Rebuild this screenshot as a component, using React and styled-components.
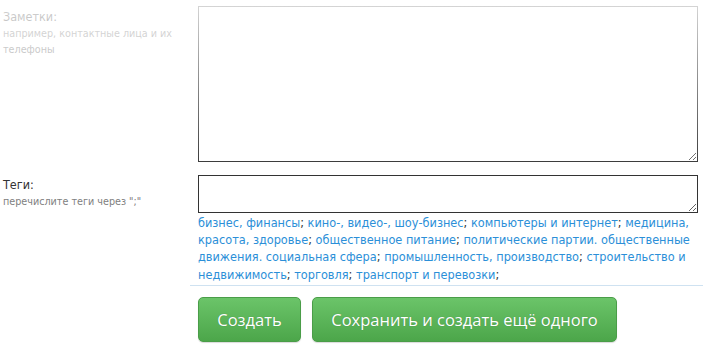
import React from 'react';
import styled, { createGlobalStyle } from 'styled-components';

const GlobalStyle = createGlobalStyle`
  body {
    margin: 0;
    background: #fff;
    font-family: "DejaVu Sans Condensed", "DejaVu Sans", sans-serif;
  }
`;

const Page = styled.div`
  position: relative;
  width: 703px;
  height: 348px;
  overflow: hidden;
  padding-top: 6px;
  box-sizing: border-box;
`;

const Fade = styled.div`
  position: absolute;
  left: 0;
  top: 0;
  right: 0;
  height: 172px;
  pointer-events: none;
  background: linear-gradient(rgba(255,255,255,0.82), rgba(255,255,255,0));
`;

const Row = styled.div`
  display: grid;
  grid-template-columns: 198px 500px;
  margin-bottom: ${p => p.gap || 0}px;
`;

const Label = styled.div`
  padding: ${p => p.top || 0}px 0 0 3px;
`;

const Title = styled.div`
  font-size: 12.5px;
  color: #333;
  line-height: 15px;
`;

const Hint = styled.div`
  font-size: 10.7px;
  color: #808080;
  line-height: 16px;
  margin-top: 2px;
  max-width: 182px;
`;

const Area = styled.textarea`
  display: block;
  box-sizing: border-box;
  width: 500px;
  height: ${p => p.h}px;
  border: 1px solid #333;
  border-radius: 0;
  margin: 0;
  padding: 4px;
  resize: vertical;
  font-family: inherit;
  background: #fff;
`;

const Tags = styled.div`
  margin-top: 1px;
  font-size: 12.6px;
  line-height: 17.2px;
  color: #333;
  padding-right: 2px;
`;

const Tag = styled.a`
  color: #2b8fd8;
  text-decoration: none;
  cursor: pointer;
`;

const Divider = styled.div`
  margin: 2px 0 0 190px;
  border-top: 1px solid #cfe2f1;
`;

const Actions = styled.div`
  display: flex;
  gap: 11px;
  padding: 11px 0 0 198px;
`;

const Button = styled.button`
  height: 45px;
  width: ${p => p.w}px;
  border: 1px solid #4a9d48;
  border-radius: 5px;
  background: linear-gradient(#6bc469, #4ca64a);
  color: #fff;
  font-family: "Open Sans", "DejaVu Sans", sans-serif;
  font-size: 16.5px;
  padding: 0;
  box-shadow: 0 1px 1px rgba(0,0,0,0.15);
  text-shadow: 0 0 1px rgba(0,0,0,0.25);
  cursor: pointer;
`;

const tags = [
  'бизнес, финансы',
  'кино-, видео-, шоу-бизнес',
  'компьютеры и интернет',
  'медицина, красота, здоровье',
  'общественное питание',
  'политические партии. общественные движения. социальная сфера',
  'промышленность, производство',
  'строительство и недвижимость',
  'торговля',
  'транспорт и перевозки',
];

export default function App() {
  return (
    <Page>
      <GlobalStyle />
      <Row gap={13}>
        <Label top={3}>
          <Title>Заметки:</Title>
          <Hint>например, контактные лица и их телефоны</Hint>
        </Label>
        <Area h={156} />
      </Row>
      <Row>
        <Label top={2}>
          <Title>Теги:</Title>
          <Hint>перечислите теги через ";"</Hint>
        </Label>
        <div>
          <Area h={38} />
          <Tags>
            {tags.map(t => (
              <React.Fragment key={t}>
                <Tag>{t}</Tag>;{' '}
              </React.Fragment>
            ))}
          </Tags>
        </div>
      </Row>
      <Divider />
      <Actions>
        <Button w={103}>Создать</Button>
        <Button w={305}>Сохранить и создать ещё одного</Button>
      </Actions>
      <Fade />
    </Page>
  );
}
